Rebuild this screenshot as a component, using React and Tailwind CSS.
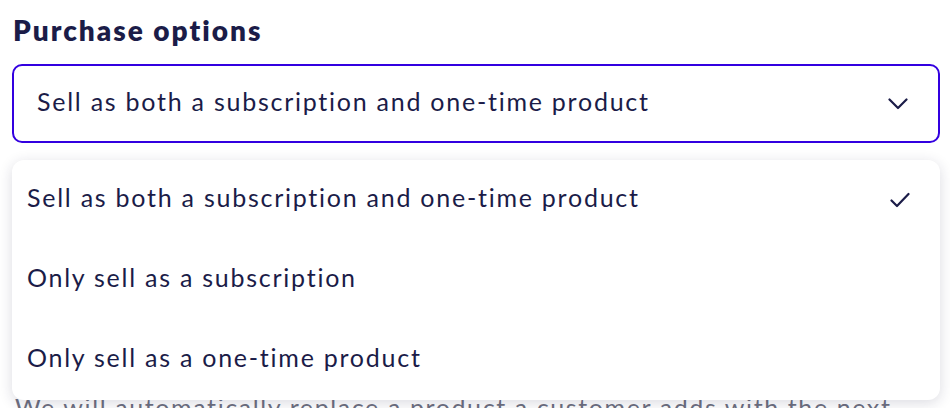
import React from "react";

const options = [
  "Sell as both a subscription and one-time product",
  "Only sell as a subscription",
  "Only sell as a one-time product",
];

function Chevron() {
  return (
    <svg width="20" height="12" viewBox="0 0 20 12" fill="none" stroke="#1b1c48" strokeWidth="2.2" strokeLinecap="round" strokeLinejoin="round">
      <path d="M1.5 1.5l8.5 8.5 8.5-8.5" />
    </svg>
  );
}

function Check() {
  return (
    <svg width="20" height="16" viewBox="0 0 20 16" fill="none" stroke="#1b1c48" strokeWidth="2.2" strokeLinecap="round" strokeLinejoin="round">
      <path d="M1.5 8.5l5.5 5.5L18.5 2" />
    </svg>
  );
}

export default function App() {
  const selected = options[0];

  return (
    <div className="w-[950px] h-[408px] overflow-hidden bg-white px-3 pt-[13px] font-['Lato',sans-serif] text-[#1b1c48]">
      <h2 className="text-[28px] leading-[34px] font-extrabold tracking-[2px] pl-[1px]">Purchase options</h2>
      <div className="mt-[17px] h-[79px] w-[928px] rounded-[10px] border-2 border-[#3300e0] flex items-center justify-between pl-[23px] pr-[30px]">
        <span className="text-[25px] tracking-[1.75px] pb-[3px]">{selected}</span>
        <Chevron />
      </div>

      <div className="relative pt-[248px]">
        <p className="pl-[3px] text-[25px] leading-[32px] tracking-[1.6px] text-[#6e7081] whitespace-nowrap">
          We will automatically replace a product a customer adds with the next
        </p>

        <ul className="absolute left-0 top-[17px] w-[928px] h-[240px] rounded-[12px] bg-white shadow-[0_3px_14px_rgba(30,30,70,0.16)] flex flex-col">
          {options.map((o) => (
            <li key={o} className="h-[80px] flex items-center justify-between pl-[15px] pr-[30px] text-[25px] tracking-[1.75px]">
              <span className="pb-[4px]">{o}</span>
              {o === selected && <Check />}
            </li>
          ))}
        </ul>
      </div>
    </div>
  );
}
